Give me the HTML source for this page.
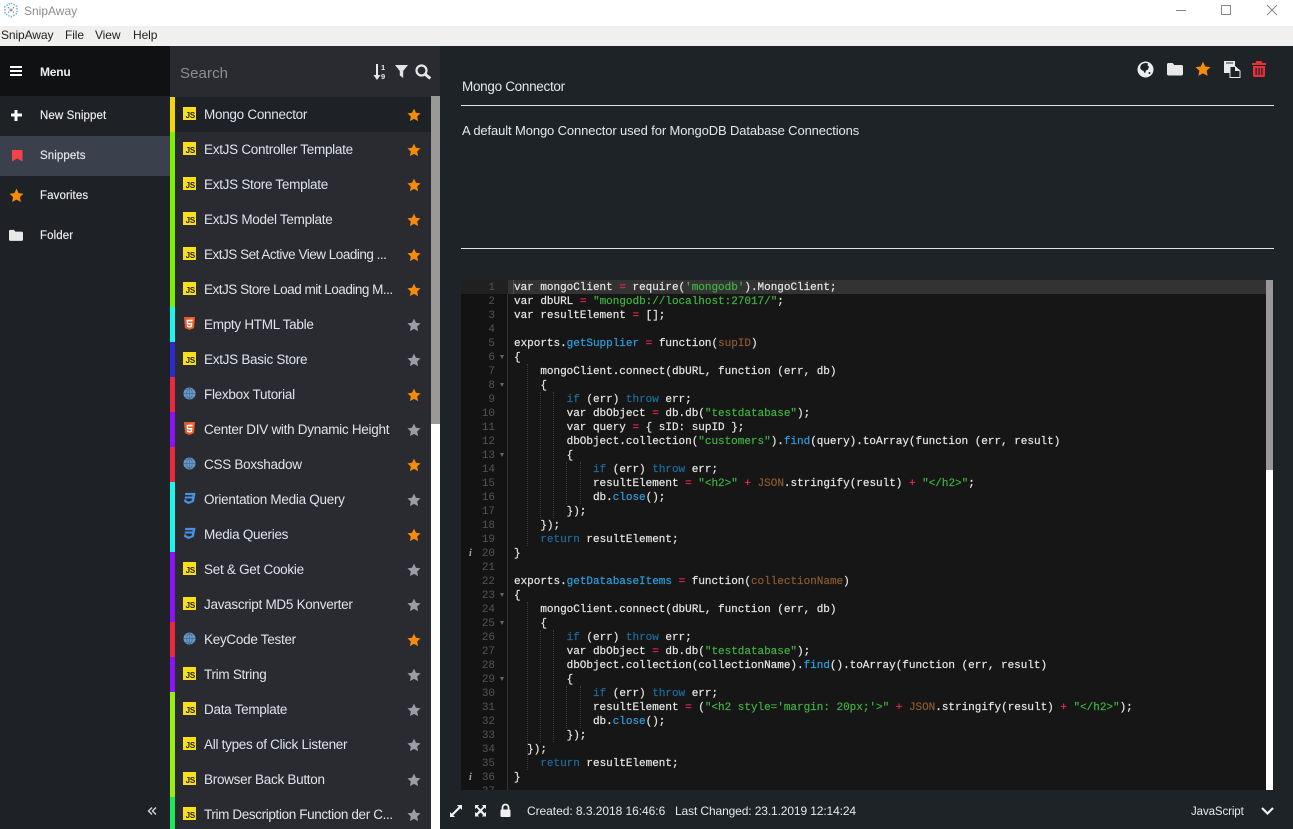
<!DOCTYPE html>
<html><head><meta charset="utf-8"><title>SnipAway</title>
<style>
*{box-sizing:border-box}
html,body{margin:0;padding:0;width:1293px;height:829px;overflow:hidden;background:#fff;font-family:"Liberation Sans",sans-serif}
.a{position:absolute}
#title{left:24px;top:4px;font-size:12px;color:#8c8c8c;line-height:15px}
#menubar{left:0;top:26px;width:1293px;height:20px;background:#f0f0ee}
#menubar span{position:absolute;top:2px;font-size:12px;line-height:15px;color:#222;letter-spacing:-.1px}
#side{left:0;top:46px;width:170px;height:783px;background:#1e2125}
#menuh{left:0;top:46px;width:170px;height:50px;background:#101112}
.mi{position:absolute;left:0;width:170px;height:40px;line-height:40px;padding-left:40px;font-size:11.5px;color:#f0f0f0;letter-spacing:.1px;-webkit-text-stroke:.15px #f0f0f0}
#lh{left:170px;top:46px;width:270px;height:50px;background:#292b31}
#list{left:170px;top:96px;width:261px;height:733px;background:#292b31;overflow:hidden}
.it{position:absolute;left:0;width:261px;height:35px}
.it i{position:absolute;left:0;top:0;width:5px;height:35px}
.it b{position:absolute;left:34px;top:0;font-weight:normal;font-size:13.5px;line-height:35px;color:#dfe4ea;letter-spacing:-.28px;white-space:nowrap}
.it svg.ic{position:absolute;left:13px;top:10px}
.it svg.st{position:absolute;left:237px;top:11px}
.js{position:absolute;left:13px;top:10px;width:13px;height:13px;background:#f7df1e;color:#222;font-size:8px;font-weight:bold;line-height:8px;text-align:right;padding:5px 1px 0 0;letter-spacing:-.2px}
#sb{left:431px;top:96px;width:9px;height:328px;background:#999}
#sw{left:431px;top:424px;width:9px;height:405px;background:#fff}
#main{left:440px;top:46px;width:853px;height:783px;background:#1e2327}
.hr{position:absolute;left:461px;width:813px;height:1px;background:#e4e4e4}
#code{left:461px;top:280px;width:805px;height:510px;background:#161616;overflow:hidden}
#gut{left:0;top:0;width:47px;height:510px;background:#131313;border-right:1px solid #333}
#act{left:47px;top:0;width:758px;height:14px;background:#333}
#actg{left:0;top:0;width:47px;height:14px;background:#202020}
#cur{left:52px;top:0;width:1px;height:14px;background:#555}
pre{margin:0;font-family:"Liberation Mono",monospace;font-size:11px;line-height:14px;letter-spacing:-.02px}
#nums{position:absolute;left:0;top:1px;width:34px;text-align:right;color:#555}
#src{position:absolute;left:53px;top:1px;color:#e6e6e6;-webkit-text-stroke:.2px}
.g{position:absolute;width:1px;border-left:1px dotted #3a3a3a}
.k{color:#1d6b9c}.s{color:#3fb23f}.f{color:#2a9fdf}.o{color:#f0285a}.p{color:#8c5a2e}
.fold{position:absolute;left:39px;width:0;height:0;border-left:2.5px solid transparent;border-right:2.5px solid transparent;border-top:4px solid #666}
.inf{position:absolute;left:8px;font:italic bold 10px/14px "Liberation Serif",serif;color:#aaa}
#scr{left:1266px;top:280px;width:7px;height:190px;background:#999}
#scw{left:1266px;top:470px;width:7px;height:320px;background:#fff}
.t{position:absolute;color:#e4e8ec;white-space:nowrap}
</style></head><body>
<svg width="0" height="0" style="position:absolute"><defs>
<symbol id="star" viewBox="0 0 24 24"><path d="M12 1l3.400 7.200 7.800 1-5.700 5.400 1.500 7.800L12 18.600l-7 3.800 1.500-7.800L.8 9.200l7.800-1z"/></symbol>
<symbol id="folder" viewBox="0 0 16 14"><path d="M1.500 1h4.200l1.500 2h7.300c.8 0 1.500.6 1.500 1.400v7.600c0 .8-.7 1.500-1.500 1.500h-13C.7 13.500 0 12.800 0 12V2.500C0 1.700 .7 1 1.500 1z"/></symbol>
<symbol id="web" viewBox="0 0 14 14"><circle cx="7" cy="7" r="6.500" fill="#6a9ac4"/><path d="M7 .5v13M.5 7h13M2 3h10M2 11h10M7 .5c-4 3.500-4 9.500 0 13M7 .5c4 3.500 4 9.500 0 13" stroke="#3f6f9c" stroke-width=".7" fill="none"/></symbol>
<symbol id="h5" viewBox="0 0 14 14"><path d="M1 0h12l-1.100 12L7 14l-4.900-2z" fill="#e4572a"/><path d="M7 1v12l3.900-1.500.9-10.500z" fill="#f06a34"/><path d="M3.800 3h6.500l-.2 1.700H5.600l.1 1.700h4.300l-.4 4.200L7 11.500l-2.700-.9-.1-1.800h1.500l.1.800 1.200.4 1.200-.4.100-1.500H4.100z" fill="#fff"/></symbol>
<symbol id="c3" viewBox="0 0 14 14"><path d="M2.500 1h11l-1.700 9.500L6 13 1 10.500l.5-2.500h2.200l-.2 1.200 2.600 1.200 3.200-1.100.4-2.300H1.700l.4-2.100h7.900l.3-1.500H2.100z" fill="#4a90e2"/></symbol>
</defs></svg>

<!-- title bar -->
<svg class="a" style="left:3px;top:2px" width="16" height="16" viewBox="0 0 16 16" fill="none"><path d="M8 1l6 3.500v7L8 15l-6-3.500v-7z" stroke="#6db3e0" stroke-width="1.500" stroke-dasharray="1.500 1.300"/><path d="M5 5.500l6 5M11 5.500l-6 5" stroke="#345" stroke-width="1" stroke-dasharray="1 1.200"/></svg>
<div class="a" id="title">SnipAway</div>
<svg class="a" style="left:1170px;top:0" width="123" height="20" fill="none" stroke="#888"><path d="M6 10.500h10"/><rect x="51.500" y="5.500" width="9" height="9"/><path d="M97 5l10 10M107 5l-10 10"/></svg>
<div class="a" id="menubar"><span style="left:1px">SnipAway</span><span style="left:65px">File</span><span style="left:95px">View</span><span style="left:133px">Help</span></div>

<!-- sidebar -->
<div class="a" id="side"></div>
<div class="a" id="menuh"></div>
<svg class="a" style="left:10px;top:66px" width="13" height="11" fill="#fff"><rect width="12" height="2" y="0"/><rect width="12" height="2" y="4"/><rect width="12" height="2" y="8"/></svg>
<div class="t" style="left:40px;top:64px;font-size:12px;line-height:16px;font-weight:bold;color:#eee;letter-spacing:-.2px">Menu</div>
<div class="mi" style="top:96px">New Snippet</div>
<div class="mi" style="top:136px;background:#3a404c;color:#e4e8ee">Snippets</div>
<div class="mi" style="top:176px">Favorites</div>
<div class="mi" style="top:216px">Folder</div>
<svg class="a" style="left:10px;top:109px" width="13" height="13" fill="#fff"><path d="M4.500 1h3v3.500H12v3H7.500V12h-3V7.500H1v-3h3.500z"/></svg>
<svg class="a" style="left:12px;top:149px" width="11" height="13" fill="#f4424a"><path d="M0 1h10.500v11.500L5.200 9.500 0 12.500z"/></svg>
<svg class="a" style="left:9px;top:188px;fill:#f58a0b" width="15" height="15"><use href="#star" width="15" height="15"/></svg>
<svg class="a" style="left:9px;top:228px;fill:#e8e8e8" width="15" height="14"><use href="#folder" width="14" height="12.300" y="1"/></svg>
<svg class="a" style="left:147px;top:806px" width="11" height="11" fill="none" stroke="#cfd6de" stroke-width="1.400"><path d="M5 1.500L1.500 5 5 8.500M9 1.500L5.500 5 9 8.500"/></svg>

<!-- list header -->
<div class="a" id="lh"></div>
<div class="t" style="left:180px;top:65px;font-size:15px;line-height:18px;color:#8b8d90;letter-spacing:.1px">Search</div>
<svg class="a" style="left:371px;top:63px" width="16" height="18" fill="#e8e8e8"><path d="M5 1h2v11h2.500L6 17 2.500 12H5z"/><text x="10" y="7" font-family="Liberation Sans" font-size="7.500" font-weight="bold">1</text><text x="10" y="16" font-family="Liberation Sans" font-size="7.500" font-weight="bold">9</text></svg>
<svg class="a" style="left:394px;top:64px" width="15" height="15" fill="#e4e4e4"><path d="M1 1h13L9.200 7v7L5.800 11.500V7z"/></svg>
<svg class="a" style="left:415px;top:64px" width="17" height="16" fill="none" stroke="#e8e8e8"><circle cx="6.500" cy="6.500" r="5" stroke-width="2.200"/><path d="M10.500 10.500l4.800 4" stroke-width="2.800"/></svg>

<!-- snippet list -->
<div class="a" id="list">
<div class="it" style="top:1px;background:#1e2125"><i style="background:#f0d50e"></i><span class="js">JS</span><b>Mongo Connector</b><svg class="st" width="14" height="14" fill="#f58a0b"><use href="#star"/></svg></div>
<div class="it" style="top:36px"><i style="background:#7cf000"></i><span class="js">JS</span><b>ExtJS Controller Template</b><svg class="st" width="14" height="14" fill="#f58a0b"><use href="#star"/></svg></div>
<div class="it" style="top:71px"><i style="background:#7cf000"></i><span class="js">JS</span><b>ExtJS Store Template</b><svg class="st" width="14" height="14" fill="#f58a0b"><use href="#star"/></svg></div>
<div class="it" style="top:106px"><i style="background:#7cf000"></i><span class="js">JS</span><b>ExtJS Model Template</b><svg class="st" width="14" height="14" fill="#f58a0b"><use href="#star"/></svg></div>
<div class="it" style="top:141px"><i style="background:#7cf000"></i><span class="js">JS</span><b style="letter-spacing:-.49px">ExtJS Set Active View Loading ...</b><svg class="st" width="14" height="14" fill="#f58a0b"><use href="#star"/></svg></div>
<div class="it" style="top:176px"><i style="background:#7cf000"></i><span class="js">JS</span><b style="letter-spacing:-.49px">ExtJS Store Load mit Loading M...</b><svg class="st" width="14" height="14" fill="#f58a0b"><use href="#star"/></svg></div>
<div class="it" style="top:211px"><i style="background:#1ff5ea"></i><svg class="ic" width="13" height="13"><use href="#h5"/></svg><b>Empty HTML Table</b><svg class="st" width="14" height="14" fill="#9a9da3"><use href="#star"/></svg></div>
<div class="it" style="top:246px"><i style="background:#2b2bd0"></i><span class="js">JS</span><b>ExtJS Basic Store</b><svg class="st" width="14" height="14" fill="#9a9da3"><use href="#star"/></svg></div>
<div class="it" style="top:281px"><i style="background:#ea2a3c"></i><svg class="ic" width="13" height="13"><use href="#web"/></svg><b>Flexbox Tutorial</b><svg class="st" width="14" height="14" fill="#f58a0b"><use href="#star"/></svg></div>
<div class="it" style="top:316px"><i style="background:#8a14f5"></i><svg class="ic" width="13" height="13"><use href="#h5"/></svg><b>Center DIV with Dynamic Height</b><svg class="st" width="14" height="14" fill="#9a9da3"><use href="#star"/></svg></div>
<div class="it" style="top:351px"><i style="background:#ea2a3c"></i><svg class="ic" width="13" height="13"><use href="#web"/></svg><b>CSS Boxshadow</b><svg class="st" width="14" height="14" fill="#f58a0b"><use href="#star"/></svg></div>
<div class="it" style="top:386px"><i style="background:#1ff5ea"></i><svg class="ic" width="13" height="13"><use href="#c3"/></svg><b>Orientation Media Query</b><svg class="st" width="14" height="14" fill="#9a9da3"><use href="#star"/></svg></div>
<div class="it" style="top:421px"><i style="background:#1ff5ea"></i><svg class="ic" width="13" height="13"><use href="#c3"/></svg><b>Media Queries</b><svg class="st" width="14" height="14" fill="#f58a0b"><use href="#star"/></svg></div>
<div class="it" style="top:456px"><i style="background:#8a14f5"></i><span class="js">JS</span><b>Set &amp; Get Cookie</b><svg class="st" width="14" height="14" fill="#9a9da3"><use href="#star"/></svg></div>
<div class="it" style="top:491px"><i style="background:#8a14f5"></i><span class="js">JS</span><b>Javascript MD5 Konverter</b><svg class="st" width="14" height="14" fill="#9a9da3"><use href="#star"/></svg></div>
<div class="it" style="top:526px"><i style="background:#ea2a3c"></i><svg class="ic" width="13" height="13"><use href="#web"/></svg><b>KeyCode Tester</b><svg class="st" width="14" height="14" fill="#f58a0b"><use href="#star"/></svg></div>
<div class="it" style="top:561px"><i style="background:#8a14f5"></i><span class="js">JS</span><b>Trim String</b><svg class="st" width="14" height="14" fill="#9a9da3"><use href="#star"/></svg></div>
<div class="it" style="top:596px"><i style="background:#9cee10"></i><span class="js">JS</span><b>Data Template</b><svg class="st" width="14" height="14" fill="#9a9da3"><use href="#star"/></svg></div>
<div class="it" style="top:631px"><i style="background:#9cee10"></i><span class="js">JS</span><b>All types of Click Listener</b><svg class="st" width="14" height="14" fill="#9a9da3"><use href="#star"/></svg></div>
<div class="it" style="top:666px"><i style="background:#9cee10"></i><span class="js">JS</span><b>Browser Back Button</b><svg class="st" width="14" height="14" fill="#9a9da3"><use href="#star"/></svg></div>
<div class="it" style="top:701px"><i style="background:#1de85a"></i><span class="js">JS</span><b style="letter-spacing:-.37px">Trim Description Function der C...</b><svg class="st" width="14" height="14" fill="#9a9da3"><use href="#star"/></svg></div>
</div>
<div class="a" id="sb"></div>
<div class="a" id="sw"></div>

<!-- main -->
<div class="a" id="main"></div>
<svg class="a" style="left:1137px;top:61px" width="17" height="17"><circle cx="8.500" cy="8.500" r="8" fill="#eee"/><path d="M4 4c2-2 5-2.500 7-1.500l-.5 2 1.500 1-1 3-2 1-1 3-1.500-2.500-2-1L3 7z" fill="#1e2327"/><circle cx="12.500" cy="12" r="1" fill="#1e2327"/></svg>
<svg class="a" style="left:1167px;top:62px;fill:#e8e8e8" width="16" height="15"><use href="#folder" width="16" height="14"/></svg>
<svg class="a" style="left:1195px;top:61px;fill:#f58a0b" width="16" height="16"><use href="#star" width="16" height="16"/></svg>
<svg class="a" style="left:1224px;top:61px" width="17" height="17"><path d="M0 0h11v5H5.500v7H0z" fill="#e8e8e8"/><rect x="2" y="1" width="7" height="2" fill="#888"/><path d="M6 5.500h5l5 4.500v6.500H6z" fill="#1e2327" stroke="#e8e8e8"/><path d="M11 5.500l5 4.500h-5z" fill="#e8e8e8"/></svg>
<svg class="a" style="left:1252px;top:61px" width="14" height="16" fill="#e8303a"><path d="M4.500 0h5l1 2H14v2H0V2h3.500z"/><path d="M1 5h12v9.500c0 .8-.6 1.500-1.400 1.500H2.400C1.600 16 1 15.300 1 14.500zM3.500 7v7h1.300V7zm2.900 0v7h1.300V7zm2.900 0v7h1.300V7z" fill-rule="evenodd"/></svg>

<div class="t" style="left:462px;top:78px;font-size:13.500px;line-height:17px;letter-spacing:-.3px">Mongo Connector</div>
<div class="hr" style="top:105px"></div>
<div class="t" style="left:462px;top:122px;font-size:13px;line-height:17px;letter-spacing:-.12px">A default Mongo Connector used for MongoDB Database Connections</div>
<div class="hr" style="top:248px"></div>

<!-- code -->
<div class="a" id="code">
<div class="a" id="gut"></div>
<div class="a" id="actg"></div>
<div class="a" id="act"></div>
<div class="a" id="cur"></div>
<div class="g" style="left:66px;top:84px;height:182px"></div>
<div class="g" style="left:79px;top:112px;height:126px"></div>
<div class="g" style="left:92px;top:112px;height:126px"></div>
<div class="g" style="left:105px;top:182px;height:42px"></div>
<div class="g" style="left:119px;top:182px;height:42px"></div>
<div class="g" style="left:66px;top:322px;height:168px"></div>
<div class="g" style="left:79px;top:350px;height:112px"></div>
<div class="g" style="left:92px;top:350px;height:112px"></div>
<div class="g" style="left:105px;top:406px;height:42px"></div>
<div class="g" style="left:119px;top:406px;height:42px"></div>
<pre id="nums">1
2
3
4
5
6
7
8
9
10
11
12
13
14
15
16
17
18
19
20
21
22
23
24
25
26
27
28
29
30
31
32
33
34
35
36
37</pre>
<span class="fold" style="top:75px"></span><span class="fold" style="top:103px"></span><span class="fold" style="top:173px"></span><span class="fold" style="top:313px"></span><span class="fold" style="top:341px"></span><span class="fold" style="top:397px"></span>
<span class="inf" style="top:267px">i</span><span class="inf" style="top:491px">i</span>
<pre id="src">var mongoClient <span class="o">=</span> require(<span class="s">'mongodb'</span>).MongoClient;
var dbURL <span class="o">=</span> <span class="s">"mongodb://localhost:27017/"</span>;
var resultElement <span class="o">=</span> [];

exports.<span class="f">getSupplier</span> <span class="o">=</span> function(<span class="p">supID</span>)
{
    mongoClient.connect(dbURL, function (err, db)
    {
        <span class="k">if</span> (err) <span class="k">throw</span> err;
        var dbObject <span class="o">=</span> db.db(<span class="s">"testdatabase"</span>);
        var query <span class="o">=</span> { sID: supID };
        dbObject.collection(<span class="s">"customers"</span>).<span class="f">find</span>(query).toArray(function (err, result)
        {
            <span class="k">if</span> (err) <span class="k">throw</span> err;
            resultElement <span class="o">=</span> <span class="s">"&lt;h2&gt;"</span> <span class="o">+</span> <span class="p">JSON</span>.stringify(result) <span class="o">+</span> <span class="s">"&lt;/h2&gt;"</span>;
            db.<span class="f">close</span>();
        });
    });
    <span class="k">return</span> resultElement;
}

exports.<span class="f">getDatabaseItems</span> <span class="o">=</span> function(<span class="p">collectionName</span>)
{
    mongoClient.connect(dbURL, function (err, db)
    {
        <span class="k">if</span> (err) <span class="k">throw</span> err;
        var dbObject <span class="o">=</span> db.db(<span class="s">"testdatabase"</span>);
        dbObject.collection(collectionName).<span class="f">find</span>().toArray(function (err, result)
        {
            <span class="k">if</span> (err) <span class="k">throw</span> err;
            resultElement <span class="o">=</span> (<span class="s">"&lt;h2 style='margin: 20px;'&gt;"</span> <span class="o">+</span> <span class="p">JSON</span>.stringify(result) <span class="o">+</span> <span class="s">"&lt;/h2&gt;"</span>);
            db.<span class="f">close</span>();
        });
  });
    <span class="k">return</span> resultElement;
}</pre>
</div>
<div class="a" id="scr"></div>
<div class="a" id="scw"></div>

<!-- footer -->
<svg class="a" style="left:449px;top:804px" width="14" height="14" fill="#f0f0f0"><path d="M8 1h5v5l-1.700-1.700L4.300 11.300 6 13H1V8l1.700 1.700 7-7z"/></svg>
<svg class="a" style="left:474px;top:804px" width="13" height="14" fill="#f0f0f0"><path d="M1 1h4L3.800 2.700 6.500 5.300 9.200 2.700 8 1h4v4l-1.500-1.200L8 6.500l2.500 2.700L12 8v4.500H8l1.200-1.500-2.700-2.500L3.800 11 5 12.500H1V8l1.500 1.200L5 6.500 2.500 3.800 1 5z"/></svg>
<svg class="a" style="left:499px;top:803px" width="13" height="15"><path d="M3.500 7V4.500a3 3 0 0 1 6 0V7" fill="none" stroke="#f0f0f0" stroke-width="1.800"/><rect x="1.500" y="6.500" width="10" height="7.500" rx="1" fill="#f0f0f0"/></svg>
<div class="t" style="left:527px;top:803px;font-size:12px;line-height:16px;letter-spacing:-.05px">Created: 8.3.2018 16:46:6</div>
<div class="t" style="left:675px;top:803px;font-size:12px;line-height:16px;letter-spacing:-.12px">Last Changed: 23.1.2019 12:14:24</div>
<div class="t" style="left:1191px;top:804px;font-size:11.500px;line-height:16px;letter-spacing:-.1px">JavaScript</div>
<svg class="a" style="left:1261px;top:806px" width="13" height="10" fill="none" stroke="#f0f0f0" stroke-width="2.200"><path d="M1 2l5.500 5.500L12 2"/></svg>
</body></html>
